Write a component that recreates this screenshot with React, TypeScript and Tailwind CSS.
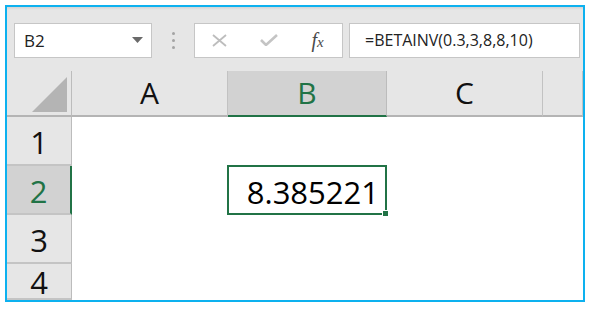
import React from 'react';

// Excel-like formula bar + sheet snapshot
const App: React.FC = () => {
  const cols = ['A', 'B', 'C', ''];
  const rows = [1, 2, 3, 4];

  return (
    <div className="w-[590px] h-[309px] bg-white pt-[5px] pl-[5px]" style={{ fontFamily: '"Open Sans", "Noto Sans", sans-serif' }}>
      <div className="w-[580px] h-[297px] border-2 border-[#0db1ef] bg-[#e6e6e6] flex flex-col overflow-hidden">
        {/* top shade */}
        <div className="h-[3px] bg-gradient-to-b from-[#d4d4d4] to-[#e6e6e6]" />

        {/* Formula bar */}
        <div className="h-[62px] flex items-start pt-[13px] pl-[7px]">
          <div className="w-[138px] h-[35px] bg-white border border-[#c6c6c6] flex items-center justify-between pl-[9px] pr-[8px]">
            <span className="text-[17px] text-[#222] leading-none">B2</span>
            <svg width="11" height="6" viewBox="0 0 11 6">
              <path d="M0 0 H11 L5.5 6 Z" fill="#6a6a6a" />
            </svg>
          </div>

          <div className="w-[42px] h-[35px] flex flex-col items-center justify-center gap-[4px]">
            <span className="w-[3px] h-[3px] rounded-full bg-[#a3a3a3]" />
            <span className="w-[3px] h-[3px] rounded-full bg-[#a3a3a3]" />
            <span className="w-[3px] h-[3px] rounded-full bg-[#a3a3a3]" />
          </div>

          <div className="w-[149px] h-[35px] bg-white border border-[#c6c6c6] flex items-center">
            <div className="w-[50px] flex justify-center">
              <svg width="15" height="13" viewBox="0 0 15 13">
                <path d="M1 1 L14 12 M14 1 L1 12" stroke="#bdbdbd" strokeWidth="1.8" />
              </svg>
            </div>
            <div className="w-[50px] flex justify-center">
              <svg width="18" height="12" viewBox="0 0 18 12">
                <path d="M1 6 L6 11 L17 1" stroke="#c4c4c4" strokeWidth="2.6" fill="none" />
              </svg>
            </div>
            <div className="w-[50px] flex justify-center">
              <span className="text-[#4a4a4a] italic leading-none" style={{ fontFamily: '"Liberation Serif", serif' }}>
                <span className="text-[20px]">f</span>
                <span className="text-[15px]">x</span>
              </span>
            </div>
          </div>

          <div className="ml-[6px] w-[231px] h-[35px] bg-white border border-[#c6c6c6] flex items-center pl-[15px]">
            <span className="text-[16px] text-[#222] leading-none">=BETAINV(0.3,3,8,8,10)</span>
          </div>
        </div>

        {/* Sheet */}
        <div className="flex-1 grid grid-cols-[65px_156px_159px_156px_1fr] grid-rows-[46px_49px_49px_49px_1fr] bg-white text-[#111]">
          {/* corner */}
          <div className="bg-[#e6e6e6] border-r border-r-[#bcbcbc] border-b-2 border-b-[#b4b4b4] flex items-end justify-end pr-[4px] pb-[3px]">
            <svg width="35" height="35" viewBox="0 0 35 35">
              <path d="M35 0 V35 H0 Z" fill="#b4b4b4" />
            </svg>
          </div>
          {cols.map((c, i) => {
            const sel = c === 'B';
            return (
              <div
                key={'h' + i}
                className={
                  sel
                    ? 'bg-[#d2d2d2] border-r border-r-[#bcbcbc] border-b-2 border-b-[#217346] flex items-center justify-center text-[30px] text-[#217346] leading-none'
                    : 'bg-[#e6e6e6] border-r border-r-[#c2c2c2] border-b-2 border-b-[#b4b4b4] flex items-center justify-center text-[30px] leading-none'
                }
              >
                {c}
              </div>
            );
          })}

          {rows.map((r) => (
            <React.Fragment key={r}>
              <div
                className={
                  r === 2
                    ? 'bg-[#d2d2d2] border-r-2 border-r-[#217346] border-b-2 border-b-[#c4c4c4] flex items-center justify-center text-[31px] text-[#217346] leading-none'
                    : 'bg-[#e6e6e6] border-r border-r-[#bcbcbc] border-b-2 border-b-[#c4c4c4] flex items-center justify-center text-[31px] leading-none'
                }
              >
                <span className="pt-[3px]">{r}</span>
              </div>
              <div />
              {r === 2 ? (
                <div className="relative -ml-px -mt-px border-2 border-[#217346] flex items-center justify-end pr-[6px]">
                  <span className="text-[31px] leading-none pt-[4px] text-black">8.385221</span>
                  <span className="absolute -right-[4px] -bottom-[4px] w-[7px] h-[7px] bg-[#217346] border border-white" />
                </div>
              ) : (
                <div />
              )}
              <div />
              <div />
            </React.Fragment>
          ))}
        </div>
      </div>
    </div>
  );
};

export default App;
